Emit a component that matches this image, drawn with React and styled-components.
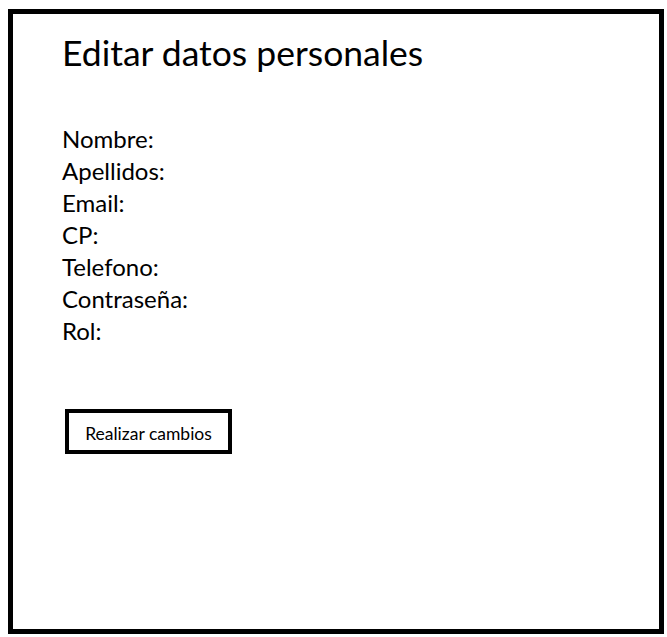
import React from "react";
import styled, { createGlobalStyle } from "styled-components";

const GlobalStyle = createGlobalStyle`
  html, body {
    margin: 0;
    padding: 0;
    background: #ffffff;
  }
  body {
    font-family: Lato, "Open Sans", sans-serif;
    color: #000000;
  }
`;

const Frame = styled.div`
  box-sizing: border-box;
  width: 656px;
  height: 625px;
  margin: 9px 0 0 8px;
  border: 5px solid #000;
  padding: 17px 0 0 49px;
  display: flex;
  flex-direction: column;
`;

const Title = styled.h1`
  margin: 0;
  font-weight: 400;
  font-size: 35.5px;
  line-height: 44px;
`;

const Fields = styled.div`
  margin-top: 48px;
  display: flex;
  flex-direction: column;
`;

const Label = styled.div`
  font-size: 24px;
  line-height: 32px;
`;

const Button = styled.button`
  box-sizing: border-box;
  align-self: flex-start;
  margin: 62px 0 0 3px;
  width: 167px;
  height: 45px;
  border: 4px solid #000;
  background: #fff;
  font-family: Lato, "Open Sans", sans-serif;
  font-size: 17.5px;
  color: #000;
  padding: 3px 0 0;
`;

const fields = ["Nombre:", "Apellidos:", "Email:", "CP:", "Telefono:", "Contraseña:", "Rol:"];

export default function App() {
  return (
    <>
      <GlobalStyle />
      <Frame>
        <Title>Editar datos personales</Title>
        <Fields>
          {fields.map((f) => (
            <Label key={f}>{f}</Label>
          ))}
        </Fields>
        <Button>Realizar cambios</Button>
      </Frame>
    </>
  );
}
